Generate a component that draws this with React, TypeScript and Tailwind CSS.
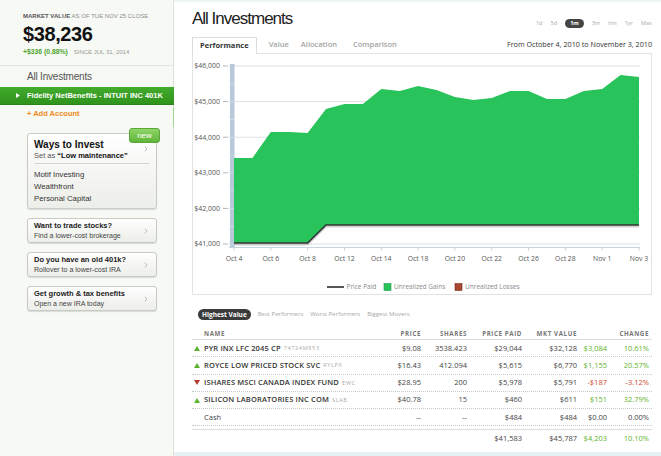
import React from "react";

const LS = "font-[family-name:Liberation_Sans,Arial,sans-serif]";
const OS = "font-[family-name:Open_Sans,sans-serif]";

const GREEN = "#28c35a";

function Chevron() {
  return (
    <svg width="4" height="6" viewBox="0 0 4 6" className="shrink-0">
      <polyline points="0.8,0.8 3,3 0.8,5.2" fill="none" stroke="#b9b9b9" strokeWidth="1" />
    </svg>
  );
}

function SmallCard({ title, sub }: { title: string; sub: string }) {
  return (
    <div className="ml-[27px] w-[130px] mt-[9px] h-[25px] rounded-[3px] border border-[#c7cbc4] bg-gradient-to-b from-white to-[#eceee9] shadow-[0_1px_1px_rgba(0,0,0,0.12)] flex items-center justify-between pl-[6px] pr-[8px]">
      <div>
        <div className="text-[7.5px] leading-[10px] font-bold text-[#222]">{title}</div>
        <div className="text-[7px] leading-[9px] text-[#444]">{sub}</div>
      </div>
      <Chevron />
    </div>
  );
}

function Sidebar() {
  return (
    <div className={`relative w-[174px] h-full shrink-0 bg-[#f7f9f4] border-r border-[#dde2d8] ${LS}`}>
      <div className="pl-[23px] pt-[13px]">
        <div className="text-[6px] leading-[7px] whitespace-nowrap">
          <span className="font-bold text-[#555]">MARKET VALUE</span>{" "}
          <span className="text-[#8d8d8d]">AS OF TUE NOV 25 CLOSE</span>
        </div>
        <div className="mt-[3px] text-[20px] leading-[22px] font-bold tracking-[-0.4px] text-[#111]">$38,236</div>
        <div className="mt-[3px] leading-[8px] whitespace-nowrap flex items-center">
          <span className="font-bold text-[#4ba52f] text-[6.8px]">+$336 (0.88%)</span>
          <span className="ml-[6px] text-[6px] text-[#9a9a9a]">SINCE JUL 31, 2014</span>
        </div>
      </div>
      <div className="mt-[9px] border-t border-[#e3e7df]" />
      <div className="mt-[4px] h-[14px] leading-[14px] pl-[27px] text-[10px] tracking-[-0.2px] text-[#555]">All Investments</div>
      <div className="mt-[3px] h-[18px] w-[174px] flex items-center bg-gradient-to-b from-[#42ab2d] to-[#2f931c] border-b border-[#2a8519]">
        <svg width="4" height="5" viewBox="0 0 4 5" className="ml-[16px]">
          <polygon points="0,0 4,2.5 0,5" fill="#ffffff" />
        </svg>
        <span className="ml-[7px] text-[7.5px] font-bold text-white whitespace-nowrap">Fidelity NetBenefits - INTUIT INC 401K</span>
      </div>
      <div className="h-[18px] flex items-center pl-[27px] text-[7.5px] font-bold text-[#f08a1c]">+ Add Account</div>
      <div className="absolute right-[-1px] top-[107px] h-[20px] w-px bg-[#a4d78f]" />

      <div className="relative ml-[27px] w-[130px] mt-[10px] h-[76px] rounded-[3px] border border-[#c7cbc4] bg-gradient-to-b from-white to-[#eceee9] shadow-[0_1px_1px_rgba(0,0,0,0.12)] px-[6px] pt-[4px]">
        <div className="absolute -top-[6px] -right-[4px] w-[31px] h-[15px] rounded-[3px] bg-gradient-to-b from-[#8fd567] to-[#5fb53a] border border-[#5aa637] flex items-center justify-center text-[8px] text-white">new</div>
        <div className="flex items-center justify-between pr-[2px]">
          <div>
            <div className="text-[10px] leading-[13px] font-bold text-[#111]">Ways to Invest</div>
            <div className="text-[7.5px] leading-[9px] text-[#555] whitespace-nowrap">
              Set as <span className="font-bold text-[#111]">“Low maintenance”</span>
            </div>
          </div>
          <Chevron />
        </div>
        <div className="mt-[3px] border-t border-[#d4d6d1]" />
        <div className="mt-[5px] text-[7.8px] text-[#333]">
          <div className="h-[12px] leading-[12px]">Motif Investing</div>
          <div className="h-[12px] leading-[12px]">Wealthfront</div>
          <div className="h-[12px] leading-[12px]">Personal Capital</div>
        </div>
      </div>
      <SmallCard title="Want to trade stocks?" sub="Find a lower-cost brokerage" />
      <SmallCard title="Do you have an old 401k?" sub="Rollover to a lower-cost IRA" />
      <SmallCard title="Get growth & tax benefits" sub="Open a new IRA today" />
    </div>
  );
}

const xs = Array.from({ length: 23 }, (_, i) => 235 + i * (405 / 22));
const ys = [158, 158, 132, 132, 133, 109, 104, 104, 89, 91, 86, 90, 97, 100, 98, 91, 91, 99, 99, 91, 89, 75, 77];
const paid = (i: number) => (i <= 4 ? 243 : 225);

function Chart() {
  const top = xs.map((x, i) => `${x.toFixed(1)},${ys[i]}`).join(" ");
  const bottomPts: string[] = [];
  for (let i = 22; i >= 0; i--) bottomPts.push(`${xs[i].toFixed(1)},${paid(i)}`);
  const poly = top + " " + bottomPts.join(" ");
  const paidLine = xs.map((x, i) => `${x.toFixed(1)},${paid(i)}`).join(" ");
  const paidShadow = xs.map((x, i) => `${x.toFixed(1)},${paid(i) + 1.6}`).join(" ");
  const yLabels = ["$46,000", "$45,000", "$44,000", "$43,000", "$42,000", "$41,000"];
  const gy = [66, 101.6, 137.2, 172.8, 208.4, 244];
  const xLabels = ["Oct 4", "Oct 6", "Oct 8", "Oct 12", "Oct 14", "Oct 18", "Oct 20", "Oct 22", "Oct 26", "Oct 28", "Nov 1", "Nov 3"];
  return (
    <svg width="457" height="240" viewBox="194 54 457 240" className="block">
      {gy.map((y, i) => (
        <g key={i}>
          <line x1="230" x2="641" y1={y} y2={y} stroke="#dde2e8" strokeWidth="1" />
          <line x1="224" x2="229" y1={y} y2={y} stroke="#aab7c6" strokeWidth="1" />
          <text x="221" y={y + 2.4} textAnchor="end" fontSize="7" fill="#555" fontFamily="Open Sans, sans-serif">
            {yLabels[i]}
          </text>
        </g>
      ))}
      <rect x="231" y="64" width="4.5" height="183" fill="#b8c9dc" />
      {Array.from({ length: 10 }, (_, i) => (
        <line key={i} x1="231" x2="235.5" y1={84 + i * 17.8} y2={84 + i * 17.8} stroke="#d3deea" strokeWidth="0.8" />
      ))}
      <polygon points={poly} fill={GREEN} />
      <polyline points={paidShadow} fill="none" stroke="rgba(0,0,0,0.18)" strokeWidth="2" />
      <polyline points={paidLine} fill="none" stroke="#333" strokeWidth="1.6" />
      <line x1="230" x2="641" y1="247.5" y2="247.5" stroke="#c6d2de" strokeWidth="1" />
      {xLabels.map((l, i) => {
        const x = 235 + i * (405 / 11);
        return (
          <g key={l}>
            <line x1={x} x2={x} y1="247.5" y2="250.5" stroke="#c6d2de" strokeWidth="1" />
            <text x={x} y="260.5" textAnchor="middle" fontSize="6.8" fill="#555" fontFamily="Open Sans, sans-serif">
              {l}
            </text>
          </g>
        );
      })}
      <line x1="328" x2="345" y1="287" y2="287" stroke="#555" strokeWidth="2" />
      <text x="347.5" y="289.3" fontSize="6.5" fill="#8a8a8a" fontFamily="Open Sans, sans-serif">Price Paid</text>
      <rect x="385" y="283.5" width="7" height="7" fill={GREEN} stroke="#1f9e48" strokeWidth="0.6" />
      <text x="395" y="289.3" fontSize="6.5" fill="#8a8a8a" fontFamily="Open Sans, sans-serif">Unrealized Gains</text>
      <rect x="456" y="283.5" width="7" height="7" fill="#a9462f" stroke="#7a2d1d" strokeWidth="0.6" />
      <text x="466" y="289.3" fontSize="6.5" fill="#8a8a8a" fontFamily="Open Sans, sans-serif">Unrealized Losses</text>
    </svg>
  );
}

type Row = {
  dir: "up" | "down" | null;
  name: string;
  code: string;
  price: string;
  shares: string;
  paid: string;
  mkt: string;
  chg: string;
  pct: string;
  tone: "g" | "r" | "n";
};

const rows: Row[] = [
  { dir: "up", name: "PYR INX LFC 2045 CP", code: "74724M853", price: "$9.08", shares: "3538.423", paid: "$29,044", mkt: "$32,128", chg: "$3,084", pct: "10.61%", tone: "g" },
  { dir: "up", name: "ROYCE LOW PRICED STOCK SVC", code: "RYLPX", price: "$16.43", shares: "412.094", paid: "$5,615", mkt: "$6,770", chg: "$1,155", pct: "20.57%", tone: "g" },
  { dir: "down", name: "ISHARES MSCI CANADA INDEX FUND", code: "EWC", price: "$28.95", shares: "200", paid: "$5,978", mkt: "$5,791", chg: "-$187", pct: "-3.12%", tone: "r" },
  { dir: "up", name: "SILICON LABORATORIES INC COM", code: "SLAB", price: "$40.78", shares: "15", paid: "$460", mkt: "$611", chg: "$151", pct: "32.79%", tone: "g" },
  { dir: null, name: "Cash", code: "", price: "--", shares: "--", paid: "$484", mkt: "$484", chg: "$0.00", pct: "0.00%", tone: "n" },
];

const GRID = "grid grid-cols-[199px_30px_46px_55px_55px_30px_43px]";

function Tri({ dir }: { dir: "up" | "down" | null }) {
  if (!dir) return <span className="inline-block w-[6px]" />;
  return (
    <svg width="6" height="5" viewBox="0 0 6 5" className="shrink-0">
      {dir === "up" ? <polygon points="3,0 6,5 0,5" fill="#5bb332" /> : <polygon points="0,0 6,0 3,5" fill="#b83a2a" />}
    </svg>
  );
}

function Table() {
  const toneCls = (t: string) => (t === "g" ? "text-[#5db42d]" : t === "r" ? "text-[#d2472a]" : "text-[#444]");
  return (
    <div className={`${OS} text-[7.5px]`}>
      <div className={`${GRID} mt-[8px] h-[12px] items-center border-b border-[#dcdcdc] text-[6.2px] font-bold tracking-[0.6px] text-[#777]`}>
        <div className="pl-[12px]">NAME</div>
        <div className="text-right">PRICE</div>
        <div className="text-right">SHARES</div>
        <div className="text-right">PRICE PAID</div>
        <div className="text-right">MKT VALUE</div>
        <div className="col-span-2 text-right pr-[1px]">CHANGE</div>
      </div>
      {rows.map((r, i) => (
        <div key={i} className={`${GRID} h-[17.3px] items-center border-b border-dotted border-[#c9c9c9] text-[#444] font-medium`}>
          <div className="flex items-center pl-[2px] whitespace-nowrap">
            <Tri dir={r.dir} />
            <span className={`ml-[4px] ${r.dir ? "font-semibold text-[#333] tracking-[0.15px]" : "text-[#444]"}`}>{r.name}</span>
            {r.code && <span className="ml-[3px] text-[5.6px] tracking-[0.6px] text-[#ababab] font-normal">{r.code}</span>}
          </div>
          <div className="text-right">{r.price}</div>
          <div className="text-right">{r.shares}</div>
          <div className="text-right">{r.paid}</div>
          <div className="text-right">{r.mkt}</div>
          <div className={`text-right ${toneCls(r.tone)}`}>{r.chg}</div>
          <div className={`text-right pr-[1px] ${toneCls(r.tone)}`}>{r.pct}</div>
        </div>
      ))}
      <div className={`${GRID} mt-[3px] h-[17px] items-center border-t border-[#dcdcdc] text-[#444] font-medium`}>
        <div />
        <div />
        <div />
        <div className="text-right">$41,583</div>
        <div className="text-right">$45,787</div>
        <div className="text-right text-[#5db42d]">$4,203</div>
        <div className="text-right pr-[1px] text-[#5db42d]">10.10%</div>
      </div>
    </div>
  );
}

function Main() {
  return (
    <div className="flex-1 h-full flex flex-col bg-white">
      <div className="h-[2px] bg-[#eef3f6]" />
      <div className="flex-1 flex flex-col pl-[18px] pr-[9px]">
        <div className="mt-[6px] h-[22px] flex items-end justify-between">
          <div className={`text-[17px] leading-[22px] tracking-[-1px] text-[#222] ${LS}`}>All Investments</div>
          <div className={`mb-[2px] flex items-center gap-[8px] text-[5.6px] text-[#a8a8a8] ${OS}`}>
            <span>1d</span>
            <span>5d</span>
            <span className="h-[9px] px-[5px] rounded-full bg-[#454545] text-white font-bold flex items-center">1m</span>
            <span>3m</span>
            <span>6m</span>
            <span>1yr</span>
            <span>Max</span>
          </div>
        </div>
        <div className={`mt-[7px] h-[16px] flex items-end ${OS}`}>
          <div className="relative z-10 -mb-px h-[17px] px-[7px] border border-b-0 border-[#dcdcdc] bg-white flex items-center text-[7.5px] font-bold text-[#333]">Performance</div>
          <div className="self-center ml-[12px] text-[7.5px] font-semibold text-[#a3a3a3]">Value</div>
          <div className="self-center ml-[12px] text-[7.5px] font-semibold text-[#a3a3a3]">Allocation</div>
          <div className="self-center ml-[16px] text-[7.5px] font-semibold text-[#a3a3a3]">Comparison</div>
          <div className="self-center ml-auto text-[7.2px] text-[#333] pb-[1px]">From October 4, 2010 to November 3, 2010</div>
        </div>
        <div className="h-[242px] border border-[#e2e2e2]">
          <Chart />
        </div>
        <div className={`mt-[14px] h-[11px] flex items-center ${OS}`}>
          <span className="ml-[6px] h-[11px] px-[4px] rounded-full bg-[#3b3b3b] text-white text-[6.5px] font-bold flex items-center">Highest Value</span>
          <span className="ml-[7px] text-[6px] text-[#a9a9a9]">Best Performers</span>
          <span className="ml-[7px] text-[6px] text-[#a9a9a9]">Worst Performers</span>
          <span className="ml-[7px] text-[6px] text-[#a9a9a9]">Biggest Movers</span>
        </div>
        <Table />
      </div>
      <div className="h-[4px] bg-[#e6f1f6]" />
    </div>
  );
}

export default function App() {
  return (
    <div className="w-[661px] h-[456px] flex overflow-hidden bg-white">
      <Sidebar />
      <Main />
    </div>
  );
}
